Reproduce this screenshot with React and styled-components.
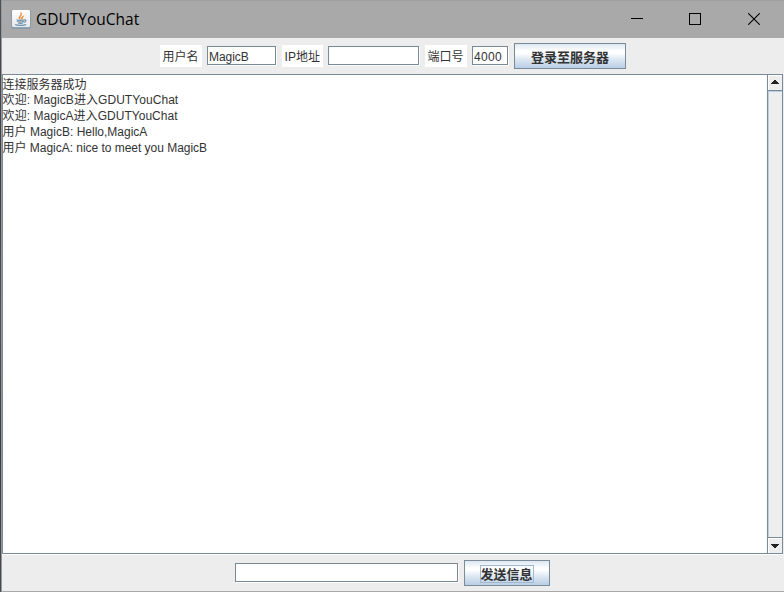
import React from 'react';
import styled, { createGlobalStyle } from 'styled-components';

const GlobalStyle = createGlobalStyle`
  * { box-sizing: border-box; }
  body { margin: 0; background: #ededed; overflow: hidden; }
`;

const STEEL = '#7a8a99';

const Desktop = styled.div`
  width: 784px;
  height: 592px;
  padding-left: 1px;
  background: linear-gradient(#4c5057, #3f3c40 30%, #55504d 55%, #3c3a3f 75%, #484b52);
`;

const Frame = styled.div`
  height: 592px;
  display: flex;
  flex-direction: column;
  background: #ededed;
  border-left: 1px solid #96989b;
  border-bottom: 1px solid #a9a9a9;
  font: 12px/16px 'Liberation Sans', 'Noto Sans CJK SC', sans-serif;
  color: #333;
`;

const TitleBar = styled.header`
  height: 38px;
  flex: none;
  display: flex;
  align-items: center;
  padding: 0 24px 1px 9px;
  background: #a9a9a9;
  border-top: 1px solid #a0a0a0;
  color: #000;
`;

const Title = styled.h1`
  margin: 0 auto 0 5px;
  font: 400 15.5px/20px 'Open Sans', 'Noto Sans', sans-serif;
`;

const WindowControls = styled.div`
  display: flex;
  gap: 46px;
  svg { display: block; }
  svg:last-child { margin-left: 1px; }
`;

const Toolbar = styled.div`
  height: 36px;
  flex: none;
  display: flex;
  align-items: flex-start;
  padding: 5px 0 0 158px;
`;

const Label = styled.label`
  width: ${(p) => p.$width}px;
  height: 22px;
  margin: 2px 5px 0 0;
  padding: 4px 0 0 2.6px;
  background: #fff;
  white-space: nowrap;
`;

const Field = styled.input`
  width: ${(p) => p.$width}px;
  height: 19px;
  margin: 3px 6px 0 0;
  padding: 2px 1px 0;
  border: 1px solid ${STEEL};
  border-radius: 0;
  outline: none;
  background: #fff;
  box-shadow: 1px 1px 0 #fff;
  font: inherit;
  letter-spacing: ${(p) => p.$spacing || 0}px;
  color: #333;
`;

const Button = styled.button`
  width: ${(p) => p.$width}px;
  height: 26px;
  display: flex;
  align-items: center;
  justify-content: center;
  padding: 1px 0 0;
  border: 1px solid ${STEEL};
  border-radius: 0;
  background: linear-gradient(#dde8f3 0%, #fff 30%, #fff 38%, #dbe6f2 65%, #b8cfe5 100%);
  font: 700 13px/16px 'Noto Sans CJK SC', sans-serif;
  color: #333;
  white-space: nowrap;
`;

const FocusLabel = styled.span`
  width: 54px;
  height: 18px;
  border: 1px solid #a3b8cc;
  line-height: 15px;
  text-indent: -1px;
`;

const ChatPane = styled.main`
  height: 480px;
  flex: none;
  display: flex;
  border: 1px solid ${STEEL};
  box-shadow: 0 1px 0 #fff;
  margin-right: 1px;
`;

const Log = styled.div`
  flex: 1;
  padding-top: 1px;
  background: #fff;
  white-space: pre;
`;

const Line = styled.div`
  height: 16px;
  line-height: 17px;
  text-indent: -0.4px;
  letter-spacing: ${(p) => p.$spacing || 0}px;
  &:first-child { line-height: 19px; }
`;

const ScrollBar = styled.div`
  width: 15px;
  display: flex;
  flex-direction: column;
  border-left: 1px solid ${STEEL};
  background: #eee;
`;

const ScrollButton = styled.div`
  height: 15px;
  flex: none;
  display: flex;
  align-items: center;
  justify-content: center;
  border-top: 1px solid #fff;
  border-left: 1px solid #fff;
  padding-right: 1px;
  padding-bottom: ${(p) => (p.$down ? 0 : 2)}px;
  svg { display: block; }
`;

const Track = styled.div`
  flex: 1;
  border: solid ${STEEL};
  border-width: 1px 0;
  box-shadow: inset 1px 0 0 #b8cfe5, inset 0 1px 0 #b8cfe5;
`;

const Composer = styled.footer`
  flex: 1;
  display: flex;
  align-items: flex-start;
  padding: 6px 0 0 233px;
`;

const JavaIcon = () => (
  <svg width="20" height="20" viewBox="0 0 20 20">
    <defs>
      <linearGradient id="tile" x2="0" y2="1">
        <stop stopColor="#fff" />
        <stop offset="1" stopColor="#e4e7e9" />
      </linearGradient>
    </defs>
    <rect x="0.5" y="1" width="19" height="18.5" rx="1.5" fill="#6f8ea8" />
    <rect x="1" y="1" width="18" height="17.3" rx="1.2" fill="url(#tile)" />
    <path d="M9 10.5C6 7.7 11 6.8 9.8 3.5c2.5 2.4-1.7 3.7-.8 7zM11 10.6c-1.8-2 .2-3.2 1.8-3.7-1.9 1.4-.8 2.1-1.8 3.7z" fill="#ec8b3c" stroke="#ec8b3c" strokeWidth=".8" />
    <path d="M5.5 10.7c1.6.6 6 .6 8 0M6 12.3c1.6.7 5.2.7 7 0M7 14c1.6.6 3.6.5 5 0M13.3 11c2.6-.5 1.8 2-.6 2.5M4.2 15.4c2 1.3 9.2 1.1 11 0" fill="none" stroke="#6c91ac" strokeWidth="1.2" />
  </svg>
);

const Arrow = ({ down }) => (
  <svg width="8" height="4" viewBox="0 0 8 4" shapeRendering="crispEdges">
    <path d={down ? 'M0 0h8v1H7v1H6v1H5v1H3V3H2V2H1V1H0z' : 'M0 4h8V3H7V2H6V1H5V0H3v1H2v1H1v1H0z'} fill="#222" />
  </svg>
);

const lines = [
  { text: '连接服务器成功' },
  { text: '欢迎: MagicB进入GDUTYouChat', spacing: 0.06 },
  { text: '欢迎: MagicA进入GDUTYouChat', spacing: 0.03 },
  { text: '用户 MagicB: Hello,MagicA' },
  { text: '用户 MagicA: nice to meet you MagicB', spacing: -0.03 },
];

export default function App() {
  return (
    <>
      <GlobalStyle />
      <Desktop>
        <Frame>
          <TitleBar>
            <JavaIcon />
            <Title>GDUTYouChat</Title>
            <WindowControls>
              <svg width="12" height="12"><path d="M0 5.5h12" stroke="#000" /></svg>
              <svg width="12" height="12"><rect x=".5" y=".5" width="11" height="11" fill="none" stroke="#000" /></svg>
              <svg width="12" height="12"><path d="M.2.2l11.6 11.6M11.8.2L.2 11.8" stroke="#000" strokeWidth="1.1" /></svg>
            </WindowControls>
          </TitleBar>
          <Toolbar>
            <Label $width={42}>用户名</Label>
            <Field $width={69} $spacing={-0.05} defaultValue="MagicB" />
            <Label $width={41}>IP地址</Label>
            <Field $width={91} />
            <Label $width={42}>端口号</Label>
            <Field $width={36} $spacing={0.33} defaultValue="4000" />
            <Button $width={112}>登录至服务器</Button>
          </Toolbar>
          <ChatPane>
            <Log>
              {lines.map((l) => (
                <Line key={l.text} $spacing={l.spacing}>{l.text}</Line>
              ))}
            </Log>
            <ScrollBar>
              <ScrollButton><Arrow /></ScrollButton>
              <Track />
              <ScrollButton $down><Arrow down /></ScrollButton>
            </ScrollBar>
          </ChatPane>
          <Composer>
            <Field $width={223} />
            <Button $width={86}><FocusLabel>发送信息</FocusLabel></Button>
          </Composer>
        </Frame>
      </Desktop>
    </>
  );
}
